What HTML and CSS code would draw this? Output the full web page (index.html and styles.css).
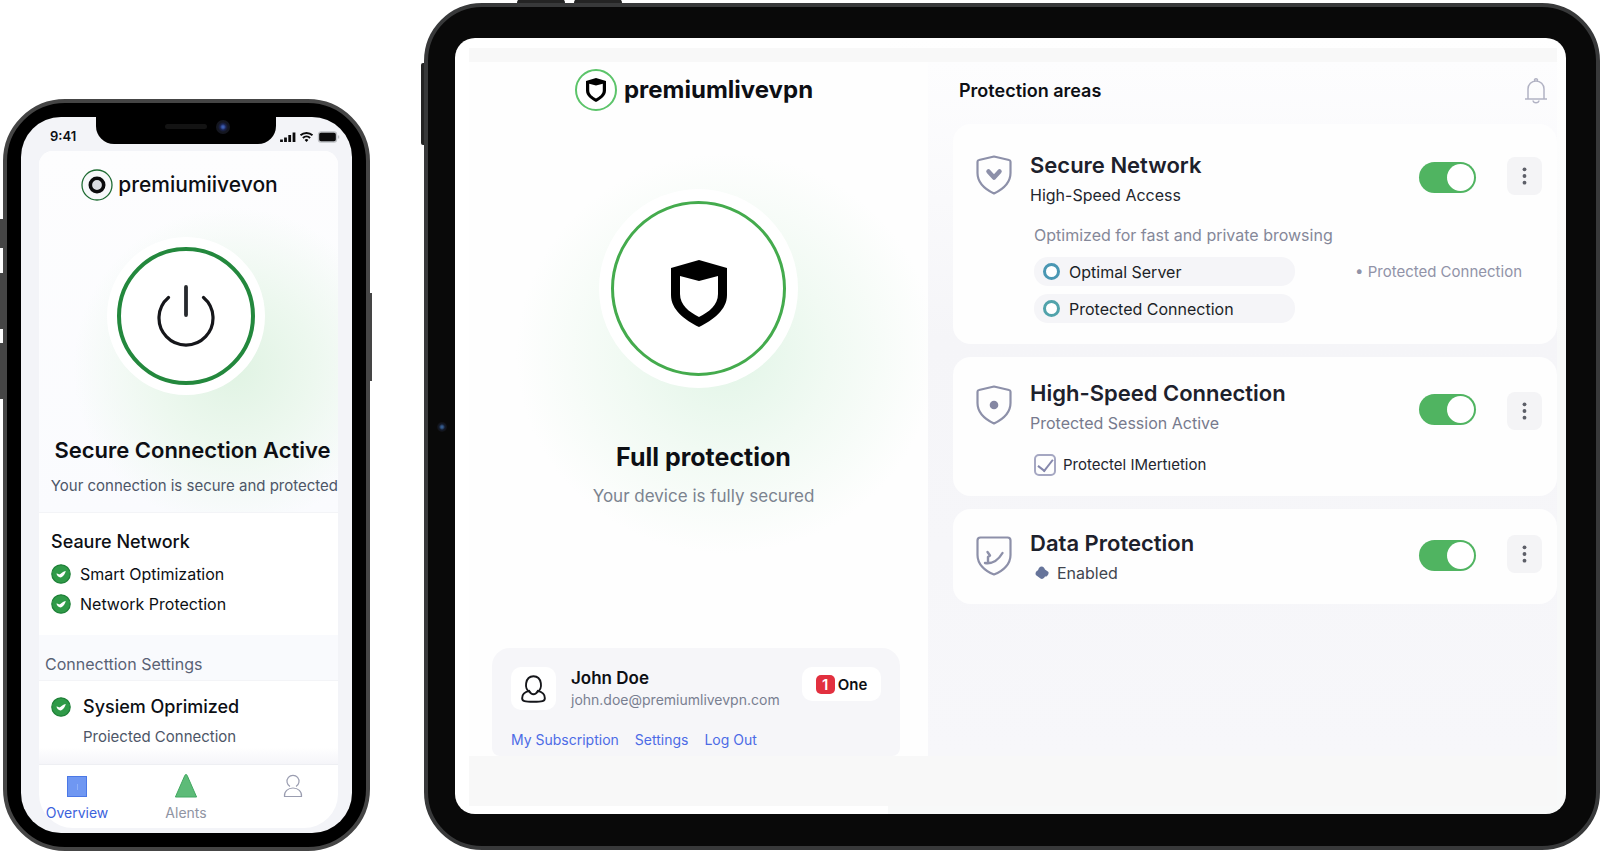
FILE: index.html
```html
<!DOCTYPE html>
<html lang="en">
<head>
<meta charset="utf-8">
<meta name="viewport" content="width=device-width, initial-scale=1">
<title>premiumlivevpn</title>
<link rel="stylesheet" href="styles.css">
</head>
<body>
<svg class="sprite" aria-hidden="true">
  <symbol id="shield" viewBox="0 0 56 67"><path fill-rule="evenodd" d="M28 0 56 8V35C56 50 42 60 28 67 14 60 0 50 0 35V8ZM9 16V34C9 45 18 52 28 57 38 52 47 45 47 34V16L28 21Z"/></symbol>
  <symbol id="done" viewBox="0 0 20 20"><circle cx="10" cy="10" r="9.2" fill="#2f9a48" stroke="#1f8038" stroke-width="1.2"/><path d="M5.4 9.5c1 .1 2 .5 2.800 1.100 2-.8 4-3.300 6.600-3.500-.6 2.600-3 6.300-5.300 6.300-2 0-3.600-2-4.100-3.900z" fill="#fff"/></symbol>
  <symbol id="dots" viewBox="0 0 6 24"><circle cx="3" cy="4" r="2.300"/><circle cx="3" cy="12" r="2.300"/><circle cx="3" cy="20" r="2.300"/></symbol>
</svg>
<div class="stage">
  <section class="phone" aria-label="Phone app">
    <span class="key key-mute"></span><span class="key key-up"></span><span class="key key-down"></span><span class="key key-power"></span>
    <div class="phone-screen">
      <div class="status">
        <span class="time">9:41</span>
        <div class="notch"><span class="speaker"></span><span class="lens"></span></div>
        <svg class="signals" viewBox="0 0 60 12" aria-hidden="true">
          <path d="M1.500 8.500v2.500M5.500 6.500v4.500M9.700 4v7M14 1.500v9.500" stroke="#0b0b0c" stroke-width="2.800"/>
          <path d="M20.500 4.200a9 9 0 0 1 12 0M22.900 6.900a5.300 5.300 0 0 1 7.200 0" fill="none" stroke="#0b0b0c" stroke-width="2"/><path d="M24.600 8.900a3 3 0 0 1 3.800 0L26.500 11z"/>
          <rect x="38.500" y="1" width="18" height="10" rx="2.500" fill="#0b0b0c" stroke="#bfc1c5" stroke-width="1.400"/><path d="M58.500 4.500v3" stroke="#bfc1c5" stroke-width="1.500"/>
        </svg>
      </div>
      <div class="phone-app">
        <div class="hero-small">
          <h1 class="brand-small"><svg class="brand-ring" viewBox="0 0 32 32" aria-hidden="true"><circle cx="16" cy="16" r="15" fill="#f7f8fa" stroke="#1f6b33" stroke-width="1.300"/><circle cx="16" cy="16" r="6.700" fill="#d9dce1" stroke="#0a0a0c" stroke-width="3.600"/></svg>premiumiivevon</h1>
          <button class="power" aria-label="Disconnect"><svg viewBox="0 0 58 62"><path d="M29 2V30" stroke="#26292d" stroke-width="3.800" stroke-linecap="round"/><path d="M11.500 12.500A27 27 0 1 0 46.500 12.500" fill="none" stroke="#15161a" stroke-width="3.200" stroke-linecap="round"/></svg></button>
          <h2 class="state-small">Secure Connection Active</h2>
          <p class="note-small">Your connection is secure and protected</p>
        </div>
        <div class="panel">
          <h3 class="panel-title">Seaure Network</h3>
          <p class="row"><svg class="tick"><use href="#done"/></svg>Smart Optimization</p>
          <p class="row"><svg class="tick"><use href="#done"/></svg>Network Protection</p>
        </div>
        <h3 class="group">Connecttion Settings</h3>
        <div class="panel panel-last">
          <h4 class="row row-strong"><svg class="tick"><use href="#done"/></svg>Sysiem Oprimized</h4>
          <p class="row-sub">Proiected Connection</p>
        </div>
        <nav class="tabs">
          <a class="tab tab-on" href="#overview"><svg viewBox="0 0 24 24"><rect x="2.500" y="2.500" width="19" height="20" fill="#6f97f2" stroke="#4b78e6"/><path d="M12.500 10v6" stroke="#8fb0f7"/></svg>Overview</a>
          <a class="tab" href="#alerts"><svg viewBox="0 0 24 24"><path d="M12 .5c.6 0 1 .4 1.200 1L22.600 23H1.400L10.800 1.500c.2-.6.600-1 1.200-1z" fill="#5dbb78" stroke="#43a862"/></svg>Alents</a>
          <a class="tab" href="#account" aria-label="Account"><svg viewBox="0 0 24 24" fill="none" stroke="#9a9db0" stroke-width="1.200"><path d="M9 12.500a6 6 0 1 1 6 0"/><path d="M3.500 22.500c-.6-5 3.500-8.500 8.500-8.500s9.100 3.500 8.500 8.500z"/></svg></a>
        </nav>
      </div>
    </div>
  </section>

  <section class="tablet" aria-label="Tablet app">
    <span class="knob knob-a"></span><span class="knob knob-b"></span><span class="key-side"></span><span class="tablet-lens"></span>
    <div class="tablet-screen">
      <div class="tablet-app">
        <main class="columns">
          <div class="home">
            <h1 class="brand"><span class="brand-badge"><svg><use href="#shield"/></svg></span>premiumlivevpn</h1>
            <div class="guard"><div class="guard-ring"><svg><use href="#shield"/></svg></div></div>
            <h2 class="state">Full protection</h2>
            <p class="note">Your device is fully secured</p>
            <div class="profile">
              <div class="profile-top">
                <span class="avatar"><svg viewBox="0 0 26 29" fill="none" stroke="#15161a" stroke-width="2"><path d="M9 17.500C3 15 4 1.200 13 1.200S23 15 17 17.500"/><path d="M8.500 16.500C4 17.500 1.200 20 1.200 24c0 3 2.500 3.800 11.800 3.800s11.800-.8 11.800-3.800c0-4-2.800-6.500-7.300-7.500-2.500 4.600-6.500 4.600-9 0z"/></svg></span>
                <div class="who"><strong class="name">John Doe</strong><span class="mail">john.doe@premiumlivevpn.com</span></div>
                <button class="plan"><span class="count">1</span>One</button>
              </div>
              <nav class="links"><a href="#subscription">My Subscription</a><a href="#settings">Settings</a><a href="#logout">Log Out</a></nav>
            </div>
          </div>
          <div class="areas">
            <header class="areas-head"><h2>Protection areas</h2><button class="bell" aria-label="Notifications"><svg viewBox="0 0 24 26" fill="none" stroke="#b1b2c3" stroke-width="1.500"><path d="M4 20.500V11a8 8 0 0 1 16 0v9.500M1 21h22M9 22.500c.5 3 5.500 3 6 0M10.500 3c-.5-3 3.500-3 3 0"/></svg></button></header>
            <article class="card card-network">
              <svg class="card-icon" viewBox="0 0 36 40"><path d="M18 1.500 33 5c1 .2 1.500.8 1.500 1.800V18c0 9-7 16-16.500 20.500C8.500 34 1.500 27 1.500 18V6.800C1.500 5.800 2 5.200 3 5z"/><path class="thick" d="M12.500 16.500l5.500 6 5.500-6"/></svg>
              <div class="card-copy"><h3>Secure Network</h3><p class="dark">High-Speed Access</p></div>
              <input class="switch" type="checkbox" role="switch" checked aria-label="Secure Network">
              <button class="more" aria-label="Secure Network options"><svg><use href="#dots"/></svg></button>
              <div class="detail">
                <p class="hint">Optimized for fast and private browsing</p>
                <div class="choices">
                  <label class="choice"><input type="radio" name="server">Optimal Server</label>
                  <span class="aside">• Protected Connection</span>
                  <label class="choice choice-teal"><input type="radio" name="server">Protected Connection</label>
                </div>
              </div>
            </article>
            <article class="card card-speed">
              <svg class="card-icon" viewBox="0 0 36 40"><path d="M18 1.500 33 5c1 .2 1.500.8 1.500 1.800V18c0 9-7 16-16.500 20.500C8.500 34 1.500 27 1.500 18V6.800C1.500 5.800 2 5.200 3 5z"/><circle class="solid" cx="18" cy="20" r="4.300"/></svg>
              <div class="card-copy"><h3>High-Speed Connection</h3><p>Protected Session Active</p></div>
              <input class="switch" type="checkbox" role="switch" checked aria-label="High-Speed Connection">
              <button class="more" aria-label="High-Speed Connection options"><svg><use href="#dots"/></svg></button>
              <div class="detail"><label class="check"><input type="checkbox" checked>Protectel IMertıetion</label></div>
            </article>
            <article class="card card-data">
              <svg class="card-icon" viewBox="0 0 36 40"><path d="M4.500 1.500h27c2 0 3 1 3 3V19c0 9-7 16-16.500 19.500C8.500 35 1.500 28 1.500 19V4.500c0-2 1-3 3-3z"/><path class="mid" d="M11.500 16l2.500 3.500-2 1.500v6M9 27c7 1 12.500-1.500 17.500-10"/></svg>
              <div class="card-copy"><h3>Data Protection</h3><p class="enabled"><svg viewBox="0 0 14 14"><path d="M6.500.5c2 0 3 1.500 3.500 3L13.500 6c.4 1.500-.5 3.500-2 4.500H10c-1 2-3 3-4.500 2L.8 9C0 7 1 5 3 4.200 3.500 2 5 .5 6.500.5z" fill="#66749a"/></svg>Enabled</p></div>
              <input class="switch" type="checkbox" role="switch" checked aria-label="Data Protection">
              <button class="more" aria-label="Data Protection options"><svg><use href="#dots"/></svg></button>
            </article>
          </div>
        </main>
      </div>
    </div>
  </section>
</div>
</body>
</html>
```

FILE: styles.css
```css
* { box-sizing: border-box; }
body { margin: 0; background: #fff; color: #0d0f14; font-family: Inter, "Liberation Sans", sans-serif; }
h1, h2, h3, h4, p { margin: 0; }
button { font: inherit; color: inherit; border: 0; padding: 0; cursor: pointer; }
a { text-decoration: none; }
input { margin: 0; }
.sprite { display: none; }

.stage { display: flex; align-items: flex-end; gap: 54px; min-height: 100vh; padding: 3px 0 0 3px; overflow: hidden; }

/* Phone */
.phone { position: relative; flex: 0 0 367px; padding: 14px; background: #000; border: 4px solid #454545; border-radius: 62px; }
.phone-screen { display: flex; flex-direction: column; background: #f3f4f8; border-radius: 40px; overflow: hidden; padding: 0 14px 5px 18px; }
.key { position: absolute; width: 4px; background: #454545; left: -8px; }
.key-mute { top: 116px; height: 29px; }
.key-up { top: 170px; height: 56px; }
.key-down { top: 240px; height: 56px; }
.key-power { left: auto; right: -6px; width: 3px; top: 190px; height: 88px; }

.status { display: grid; grid-template-columns: 57px 180px 60px; align-items: start; height: 34px; }
.time { padding: 10px 0 0 11px; font-size: 13px; line-height: 18px; font-weight: 600; }
.notch { height: 27px; background: #000; border-radius: 0 0 18px 18px; display: flex; align-items: flex-start; gap: 9px; padding: 3px 0 0 69px; }
.speaker { width: 42px; height: 5px; margin-top: 4px; border-radius: 3px; background: #131313; }
.lens { width: 14px; height: 14px; border-radius: 50%; background: radial-gradient(circle, #3c5cb0 0 1px, #1a2350 3px, #14161f 5px); }
.signals { width: 60px; height: 12px; margin: 14px 0 0 4px; }

.phone-app { display: flex; flex-direction: column; border-radius: 14px 14px 34px 34px; overflow: hidden; background: #fff; }
.hero-small { display: flex; flex-direction: column; align-items: center; padding: 18px 0 14px;
  background: radial-gradient(circle 160px at 65% 60%, #e0f3e3, #edf8ef 50%, transparent), linear-gradient(#fdfdfe, #fafbfe); }
.brand-small { display: flex; align-items: center; gap: 5px; padding-right: 18px; font-size: 21px; line-height: 32px; font-weight: 500; }
.brand-ring { width: 32px; height: 32px; }
.power { display: grid; place-items: center; width: 138px; height: 138px; margin: 46px 6px 51px 0; border-radius: 50%; background: #fff; border: 4px solid #23883d; box-shadow: 0 0 0 10px #fff; }
.power svg { width: 58px; height: 62px; }
.state-small { padding-left: 8px; font-size: 22px; line-height: 28px; font-weight: 600; white-space: nowrap; }
.note-small { align-self: flex-end; margin-top: 10px; font-size: 15px; line-height: 24px; color: #4d5667; white-space: nowrap; }
.panel { padding: 16px 12px 13px; border-top: 1px solid #f3f4f7; }
.panel-title { margin-bottom: 7px; font-size: 18px; line-height: 26px; font-weight: 500; }
.row { display: flex; align-items: center; gap: 9px; margin-bottom: 6px; font-size: 16px; line-height: 24px; }
.tick { width: 20px; height: 20px; }
.group { padding: 21px 6px 8px; background: #f9fafd; font-size: 16px; line-height: 16px; font-weight: 400; color: #596275; }
.panel-last { padding: 13px 12px 15px; background: linear-gradient(#fff 80%, #f5f5f9); }
.row-strong { gap: 12px; margin-bottom: 5px; font-size: 18px; line-height: 26px; font-weight: 500; }
.row-sub { padding-left: 32px; font-size: 15px; line-height: 24px; color: #4d5667; }
.tabs { display: grid; grid-template-columns: 76px 142px 72px; padding: 9px 0 0; height: 64px; border-top: 1px solid #eeeff3; }
.tab { display: flex; flex-direction: column; align-items: center; gap: 6px; font-size: 14px; line-height: 18px; color: #9094a3; }
.tab svg { width: 24px; height: 24px; }
.tab-on { color: #3c62dc; }

/* Tablet */
.tablet { position: relative; flex: 1 1 0; min-width: 1000px; align-self: flex-start; padding: 31px 30px 32px 27px; background: #090909; border: 4px solid #38393a; border-radius: 58px; }
.tablet-screen { padding: 10px 9px 8px 14px; border-radius: 20px; background: linear-gradient(to right, #fff 39%, transparent 39%), linear-gradient(#fff, #f8f9f9 40%); }
.knob { position: absolute; top: -8px; height: 4px; width: 48px; background: #242424; border-radius: 8px 8px 0 0; }
.knob-a { left: 89px; }
.knob-b { left: 146px; }
.key-side { position: absolute; left: -7px; top: 56px; width: 3px; height: 82px; background: #242424; border-radius: 2px 0 0 2px; }
.tablet-lens { position: absolute; left: 9px; top: 415px; width: 10px; height: 10px; border-radius: 50%; background: radial-gradient(circle, #345a8c 0 1px, #131a2a 3px, #101012 5px); }
.tablet-app { padding: 14px 0 50px; background: #f8f8f8; }
.columns { display: grid; grid-template-columns: 459fr 629fr; min-height: 694px; }

.home { display: flex; flex-direction: column; align-items: center; padding-top: 7px; overflow: hidden;
  background: radial-gradient(ellipse 210px 200px at 56% 42%, #e2f5e7, #f1faf3 50%, transparent), #fefefe; }
.brand { display: flex; align-items: center; gap: 7px; padding-right: 9px; font-size: 24px; line-height: 42px; font-weight: 700; }
.brand-badge { display: grid; place-items: center; width: 42px; height: 42px; border: 2px solid #5cc46a; border-radius: 50%; background: #fff; }
.brand-badge svg { width: 20px; height: 24px; }
.guard { margin: 78px 0 53px; padding: 12px; border-radius: 50%; background: #fff; }
.guard-ring { display: grid; place-items: center; width: 175px; height: 175px; padding-top: 10px; border: 3px solid #44ab4d; border-radius: 50%; }
.guard-ring svg { width: 56px; height: 67px; }
.state { padding-left: 10px; font-size: 25px; line-height: 32px; font-weight: 700; }
.note { margin-top: 11px; padding-left: 10px; font-size: 17px; line-height: 24px; color: #7b838f; }
.profile { align-self: stretch; margin: auto 28px 0 23px; padding: 19px 19px 0; border-radius: 18px 18px 8px 8px; background: #f6f6f9; }
.profile-top { display: flex; align-items: flex-start; }
.avatar { display: grid; place-items: center; width: 45px; height: 43px; border-radius: 10px; background: #fff; }
.avatar svg { width: 25px; height: 28px; }
.who { display: flex; flex-direction: column; flex: 1; padding-left: 15px; }
.name { font-size: 17px; line-height: 22px; font-weight: 600; }
.mail { font-size: 14px; line-height: 22px; color: #797f91; }
.plan { display: flex; align-items: center; justify-content: center; gap: 3px; width: 79px; height: 34px; border-radius: 10px; background: #fff; font-size: 15px; font-weight: 600; }
.count { width: 19px; border-radius: 5px; background: #e2303f; color: #fff; line-height: 19px; text-align: center; }
.links { display: flex; gap: 16px; padding: 18px 0 6px; font-size: 14px; line-height: 21px; }
.links a { color: #4c6be6; }

.areas { display: flex; flex-direction: column; gap: 13px; padding-left: 25px; background: linear-gradient(#fdfdfe, #f5f5f8 40%, #f7f7fa); }
.areas-head { display: flex; align-items: center; justify-content: space-between; height: 49px; padding: 9px 9px 0 6px; }
.areas-head h2 { font-size: 18px; line-height: 24px; font-weight: 600; }
.bell { background: none; }
.bell svg { display: block; width: 24px; height: 26px; }
.card { display: grid; grid-template-columns: 36px 1fr auto auto; align-content: start; align-items: start; padding: 27px 15px 21px 23px; border-radius: 18px; background: #fefefe; }
.card-icon { width: 36px; height: 40px; margin-top: 4px; fill: none; stroke: #8d90a9; stroke-width: 2.2; stroke-linejoin: round; }
.card-icon .thick { stroke-width: 4.500; stroke-linecap: round; }
.card-icon .mid { stroke-width: 2.400; stroke-linecap: round; }
.card-icon .solid { fill: #8486a2; stroke: none; }
.card-copy { padding-left: 18px; font-size: 16px; line-height: 28px; color: #777a8d; }
.card-copy h3 { margin-bottom: 2px; font-size: 22px; line-height: 28px; font-weight: 600; color: #1d212c; }
.card-copy .dark { color: #23262f; }
.enabled { display: flex; align-items: center; gap: 8px; padding-left: 5px; color: #41454f; }
.enabled svg { width: 14px; height: 14px; }
.switch { appearance: none; display: flex; justify-content: flex-end; width: 57px; height: 31px; margin: 11px 31px 0 0; padding: 2px; border-radius: 16px; background: #50b461; cursor: pointer; }
.switch::before { content: ""; width: 27px; height: 27px; border-radius: 50%; background: #fff; }
.switch:not(:checked) { justify-content: flex-start; background: #c9cbd4; }
.more { display: grid; place-items: center; width: 35px; height: 38px; margin-top: 6px; border-radius: 8px; background: #f4f4f6; }
.more svg { width: 5px; height: 20px; fill: #5d5f68; }
.detail { grid-column: 2 / -1; padding-left: 22px; }
.hint { padding-top: 14px; font-size: 16px; line-height: 24px; color: #858899; }
.choices { display: grid; grid-template-columns: 261px 1fr; gap: 8px 60px; padding-top: 10px; }
.choice { grid-column: 1; display: flex; align-items: center; gap: 9px; height: 29px; padding-left: 9px; border-radius: 14px; background: #f5f5f8; font-size: 16px; color: #1c1f27; }
.choice input { appearance: none; width: 17px; height: 17px; border: 3px solid #4a97b3; border-radius: 50%; background: #fff; }
.choice-teal input { border-color: #51a3ab; }
.choice input:checked { background: #4a97b3; }
.aside { font-size: 15px; line-height: 29px; color: #9193a8; white-space: nowrap; }
.check { display: flex; align-items: center; gap: 7px; padding-top: 15px; font-size: 15px; line-height: 24px; color: #23262f; }
.check input { appearance: none; display: grid; justify-content: center; width: 22px; height: 22px; border: 2px solid #a5a7c2; border-radius: 5px; }
.check input:checked::before { content: ""; width: 7px; height: 13px; border: solid #8587ac; border-width: 0 2px 2px 0; transform: rotate(38deg); }

.card-speed { padding-top: 22px; padding-bottom: 19px; }
.card-speed .card-icon { margin-top: 6px; }
.card-speed .switch { margin-top: 15px; }
.card-speed .more { margin-top: 13px; }
.card-speed .detail { padding-top: 1px; }
.card-data { padding-top: 20px; padding-bottom: 17px; }
.card-data .card-icon { margin-top: 7px; }
```
